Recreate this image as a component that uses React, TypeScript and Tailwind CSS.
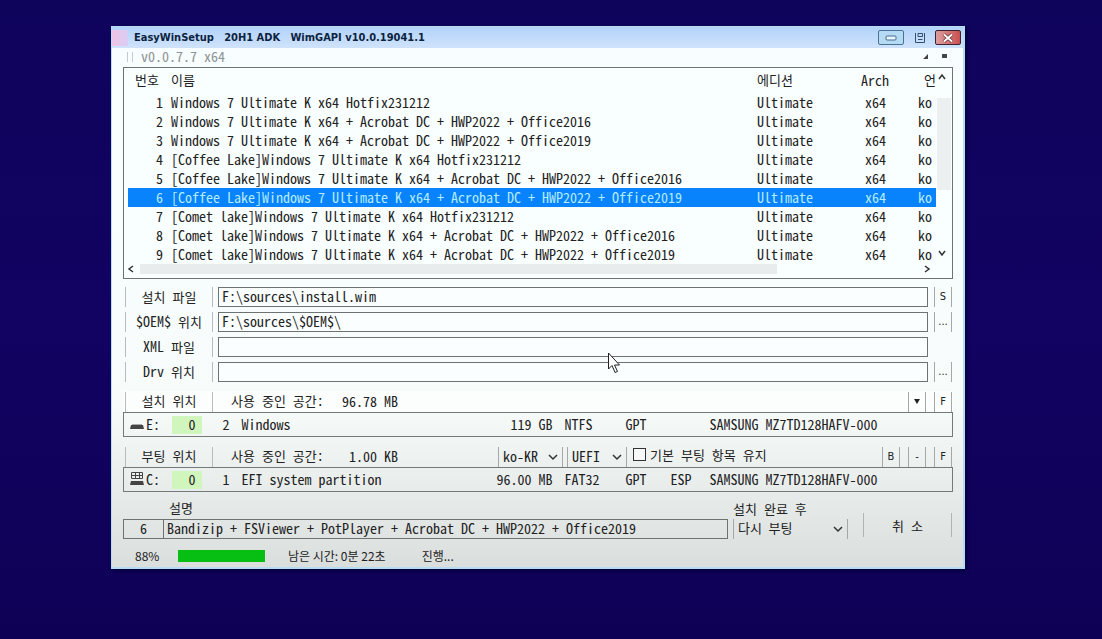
import type { ReactNode } from "react";

const K = "Windows 7 Ultimate K x64";
const images = [
  K + " Hotfix231212",
  K + " + Acrobat DC + HWP2022 + Office2016",
  K + " + Acrobat DC + HWP2022 + Office2019",
  "[Coffee Lake]" + K + " Hotfix231212",
  "[Coffee Lake]" + K + " + Acrobat DC + HWP2022 + Office2016",
  "[Coffee Lake]" + K + " + Acrobat DC + HWP2022 + Office2019",
  "[Comet lake]" + K + " Hotfix231212",
  "[Comet lake]" + K + " + Acrobat DC + HWP2022 + Office2016",
  "[Comet lake]" + K + " + Acrobat DC + HWP2022 + Office2019",
];
const selected = 5;

// Hangul runs are set one step smaller than the Latin text and spaces around them.
function Mixed({ text }: { text: string }) {
  return (
    <span className="text-sm leading-4 whitespace-pre">
      {text.split(/([가-힣]+)/).map((part, i) =>
        i % 2 ? <span key={i} className="text-[13px] leading-4">{part}</span> : part
      )}
    </span>
  );
}

function Chevron({ d, className = "" }: { d: string; className?: string }) {
  return (
    <svg viewBox="0 0 10 10" className={"h-2.5 w-2.5 shrink-0 " + className} fill="none" stroke="#333" strokeWidth="1.5">
      <path d={d} />
    </svg>
  );
}

function LabelButton({ text }: { text: string }) {
  return (
    <button type="button" className="ml-0.5 flex h-5 w-[88px] shrink-0 items-center justify-center border-x border-[#b9bcbc] pb-0.5">
      <Mixed text={text} />
    </button>
  );
}

function MiniButton({ children, label }: { children: ReactNode; label: string }) {
  return (
    <button type="button" aria-label={label} className="flex h-5 w-[18px] shrink-0 items-center justify-center border-x border-[#a4a8a8] font-['DejaVu_Sans_Condensed',sans-serif] text-[11px]">
      {children}
    </button>
  );
}

function PathRow({ label, value, button }: { label: string; value: string; button?: string }) {
  return (
    <div className="flex h-5 items-center">
      <LabelButton text={label} />
      <input
        aria-label={label}
        defaultValue={value}
        className="ml-[5px] h-5 min-w-0 flex-1 border border-[#6d7272] bg-[#fbfefe] px-[3px] pb-0.5 text-sm leading-4 outline-none"
      />
      <div className="ml-1.5 w-[19px] shrink-0">{button && <MiniButton label={label + " " + button}>{button}</MiniButton>}</div>
    </div>
  );
}

function Usage({ value }: { value: string }) {
  return (
    <>
      <span className="ml-[18px] w-[93px] shrink-0 pb-0.5"><Mixed text="사용 중인 공간:" /></span>
      <span className="w-[74px] shrink-0 pb-0.5 text-right whitespace-pre">{value}</span>
    </>
  );
}

function Partition({ icon, drive, index, name, size, fs, flag, label }: {
  icon: ReactNode; drive: string; index: string; name: string; size: string; fs: string; flag: string; label: string;
}) {
  return (
    <table aria-label={label} className="h-[25px] w-full table-fixed border border-[#747979] whitespace-pre">
      <tbody>
        <tr>
          <td className="w-12 pb-0.5 pl-1.5">
            <div className="flex items-center gap-0.5">{icon}<span>{drive}</span></div>
          </td>
          <td className="w-[30px] p-0">
            <div className="h-[18px] bg-[#d0f5bd] pr-1.5 text-right leading-4">0</div>
          </td>
          <td className="w-7 pb-0.5 text-right">{index}</td>
          <td className="pb-0.5 pl-3">{name}</td>
          <td className="w-[70px] pb-0.5 text-right">{size}</td>
          <td className="w-[73px] pb-0.5 pl-3">{fs}</td>
          <td className="w-[45px] pb-0.5">GPT</td>
          <td className="w-[39px] pb-0.5">{flag}</td>
          <td className="w-[243px] pb-0.5">SAMSUNG MZ7TD128HAFV-000</td>
        </tr>
      </tbody>
    </table>
  );
}

function Combo({ label, value, className }: { label: string; value: string; className: string }) {
  return (
    <div className={"relative flex h-5 shrink-0 items-center border-x border-[#a4a8a8] " + className}>
      <select aria-label={label} defaultValue={value} className="h-5 w-full appearance-none bg-transparent pb-0.5 pl-1 outline-none">
        <option>{value}</option>
      </select>
      <Chevron d="M1 3l4 4 4-4" className="pointer-events-none absolute right-1" />
    </div>
  );
}

export default function App() {
  return (
    <main className="min-h-screen bg-linear-to-b from-[#0f045c] via-[#120262] to-[#0e0155] pt-[26px] pr-[137px] pb-[70px] pl-[111px] font-['Noto_Sans_Mono_CJK_KR','Noto_Sans_CJK_KR',monospace] text-sm leading-4 text-[#222]">
      <section className="border border-r-2 border-b-2 border-[#b5dcf0] bg-linear-to-b from-[#f8fdff] via-[#f7fcfb] via-70% to-[#dadedd] shadow-[2px_2px_3px_#00003d]">
        <header className="flex h-[21px] items-center bg-linear-to-b from-[#b3d3fb] to-[#cfe3fb] pr-0.5">
          <div className="h-4 w-4 bg-linear-to-r from-[#eec4e4] to-[#d9cdf6]" />
          <h1 className="ml-1.5 flex-1 font-['DejaVu_Sans_Condensed','DejaVu_Sans',sans-serif] text-[11px] font-bold whitespace-pre text-[#0c2340]">
            EasyWinSetup   20H1 ADK   WimGAPI v10.0.19041.1
          </h1>
          <button type="button" aria-label="최소화" className="flex h-[15px] w-[26px] items-center justify-center rounded-xs border border-[#4b7296] bg-[#b5dbf4]">
            <svg viewBox="0 0 12 6" className="h-1.5 w-3" fill="#e8f6ff" stroke="#47698a"><rect x="1" y="1" width="10" height="4" rx="1" /></svg>
          </button>
          <button type="button" aria-label="최대화" className="ml-1.5 flex h-[15px] w-[19px] items-center justify-center">
            <svg viewBox="0 0 12 12" className="h-3 w-3" fill="none" stroke="#33506e"><path d="M1.500 1v9.500h9V1M4 1.500h4.500v3H4zM4 7.500h4.500" /></svg>
          </button>
          <button type="button" aria-label="닫기" className="ml-1.5 flex h-[15px] w-[26px] items-center justify-center rounded-xs border border-[#3b2430] bg-linear-to-r from-[#dc9d9f] to-[#c94f50]">
            <svg viewBox="0 0 12 10" className="h-2.5 w-3" fill="none"><path d="M2 1.500l8 7M10 1.500l-8 7" stroke="#6c3438" strokeWidth="3.500" /><path d="M2 1.500l8 7M10 1.500l-8 7" stroke="#fff" strokeWidth="1.800" /></svg>
          </button>
        </header>

        <div className="px-[11px] pr-2.5">
          <div className="flex h-[19px] items-center pb-0.5 text-[#8d9292]">
            <span className="ml-1 h-2.5 w-1.5 border-x border-[#c6caca]" />
            <span className="ml-2 flex-1 pb-0.5 whitespace-pre">v0.0.7.7 x64</span>
            <svg viewBox="0 0 30 8" className="mr-px h-2 w-[30px]" fill="#444"><path d="M1 6h5V1zM20 1h5v4h-5z" /></svg>
          </div>

          <div className="border border-[#6d7272] bg-[#f9fefe]">
            <div className="flex">
              <table className="ml-1 min-w-0 flex-1 table-fixed whitespace-pre">
                <thead>
                  <tr className="h-[25px] text-left">
                    <th className="w-[39px] pb-0.5 pl-[7px] text-[13px] leading-4 font-normal">번호</th>
                    <th className="pb-0.5 pl-1 text-[13px] leading-4 font-normal">이름</th>
                    <th className="w-[104px] pb-0.5 text-[13px] leading-4 font-normal">에디션</th>
                    <th className="w-[57px] pb-0.5 font-normal">Arch</th>
                    <th className="w-[17px] pb-0.5 pl-1.5 text-[13px] leading-4 font-normal">언</th>
                  </tr>
                </thead>
                <tbody>
                  {images.map((name, i) => (
                    <tr key={name} className={i === selected ? "h-[19px] bg-[#0883fb] text-[#b4ecff]" : "h-[19px]"}>
                      <td className="pr-1 pb-0.5 text-right">{i + 1}</td>
                      <td className="pb-0.5 pl-1">{name}</td>
                      <td className="pb-0.5">Ultimate</td>
                      <td className="pb-0.5 pl-1">x64</td>
                      <td className="pb-0.5">ko</td>
                    </tr>
                  ))}
                </tbody>
              </table>
              <div className="flex w-4 shrink-0 flex-col items-center pt-1 pb-1.5">
                <Chevron d="M2 7l3-4 3 4" className="mr-1" />
                <div className="mt-4 h-[92px] w-3.5 bg-[#ecf0f0]" />
                <Chevron d="M2 3l3 4 3-4" className="mt-auto mr-1" />
              </div>
            </div>
            <div className="flex h-3.5 items-center pr-5 pb-1 pl-0.5">
              <Chevron d="M7 2l-4 3 4 3" />
              <div className="ml-1 h-2.5 w-[79%] bg-[#e8ecec]" />
              <Chevron d="M3 2l4 3-4 3" className="ml-auto" />
            </div>
          </div>

          <div className="mt-2 flex flex-col gap-[5px]">
            <PathRow label="설치 파일" value="F:\sources\install.wim" button="S" />
            <PathRow label="$OEM$ 위치" value="F:\sources\$OEM$\" button="..." />
            <div className="relative">
              <PathRow label="XML 파일" value="" />
              <svg viewBox="0 0 14 22" className="absolute top-[15px] left-[58.300%] z-10 h-[22px] w-3.5" fill="#fff" stroke="#222">
                <path d="M1.500 1v16l3.500-3.500 3 7 2.500-1-3-6.500h5z" />
              </svg>
            </div>
            <PathRow label="Drv 위치" value="" button="..." />
          </div>

          <div className="mt-[9px] flex h-[21px] items-center bg-[#fcfefe]">
            <LabelButton text="설치 위치" />
            <Usage value="96.78 MB" />
            <div className="ml-auto flex gap-2 pr-px">
              <MiniButton label="설치 드라이브 선택"><svg viewBox="0 0 6 5" className="h-[5px] w-1.5" fill="#222"><path d="M0 0h6L3 5z" /></svg></MiniButton>
              <MiniButton label="설치 드라이브 포맷">F</MiniButton>
            </div>
          </div>
          <Partition
            label="설치 파티션"
            icon={<svg viewBox="0 0 14 14" className="h-3.5 w-3.5"><path d="M1 8h12l1 4H0z" fill="#444" /><path d="M2 7.500h10" stroke="#aaa" /></svg>}
            drive="E:" index="2" name="Windows" size="119 GB" fs="NTFS" flag=""
          />

          <div className="mt-[9px] flex h-[21px] items-center">
            <LabelButton text="부팅 위치" />
            <Usage value="1.00 KB" />
            <Combo label="언어" value="ko-KR" className="ml-[100px] w-[65px]" />
            <Combo label="부팅 방식" value="UEFI" className="ml-1 w-[60px]" />
            <label className="ml-1.5 flex shrink-0 items-center gap-1 pb-1">
              <input type="checkbox" className="h-[13px] w-[13px] appearance-none border border-[#333] bg-[#f7f9f9]" />
              <Mixed text="기본 부팅 항목 유지" />
            </label>
            <div className="ml-auto flex gap-2 pr-px">
              <MiniButton label="부팅 기록">B</MiniButton>
              <MiniButton label="부팅 드라이브 해제">-</MiniButton>
              <MiniButton label="부팅 드라이브 포맷">F</MiniButton>
            </div>
          </div>
          <Partition
            label="부팅 파티션"
            icon={<svg viewBox="0 0 14 16" className="h-4 w-3.5"><path d="M1.500 1.500h11v6h-11zM1 4.500h12M5.500 1v6M9.500 1v6" fill="none" stroke="#444" /><path d="M1 10h12l1 4H0z" fill="#444" /></svg>}
            drive="C:" index="1" name="EFI system partition" size="96.00 MB" fs="FAT32" flag="ESP"
          />

          <div className="flex items-end pt-2">
            <div className="min-w-0 flex-1">
              <label htmlFor="desc" className="ml-[46px] block h-[19px] text-[13px] leading-4">설명</label>
              <div className="flex h-5">
                <input aria-label="번호" defaultValue="6" className="h-5 w-[41px] border border-[#6d7272] bg-transparent pb-0.5 text-center outline-none" />
                <input id="desc" defaultValue="Bandizip + FSViewer + PotPlayer + Acrobat DC + HWP2022 + Office2019" className="-ml-px h-5 min-w-0 flex-1 border border-[#6d7272] bg-transparent px-[3px] pb-0.5 outline-none" />
              </div>
            </div>
            <div className="ml-[5px] w-[115px]">
              <div className="flex h-[19px] items-start"><Mixed text="설치 완료 후" /></div>
              <Combo label="설치 완료 후" value="다시 부팅" className="text-[13px]" />
            </div>
            <button type="button" className="mr-px mb-0.5 ml-[15px] h-6 w-[89px] border-x border-[#b0b4b4]"><Mixed text="취 소" /></button>
          </div>

          <div className="flex h-7 items-center pt-1.5 font-['Noto_Sans_CJK_KR',sans-serif] text-xs whitespace-pre">
            <span className="ml-3 w-[43px]">88%</span>
            <div role="progressbar" aria-label="진행률" aria-valuenow={88} className="h-3 w-[99px]">
              <div className="h-3 w-[88%] bg-[#06bf12]" />
            </div>
            <span className="ml-[11px]">남은 시간: 0분 22초</span>
            <span className="ml-9">진행...</span>
          </div>
        </div>
      </section>
    </main>
  );
}
